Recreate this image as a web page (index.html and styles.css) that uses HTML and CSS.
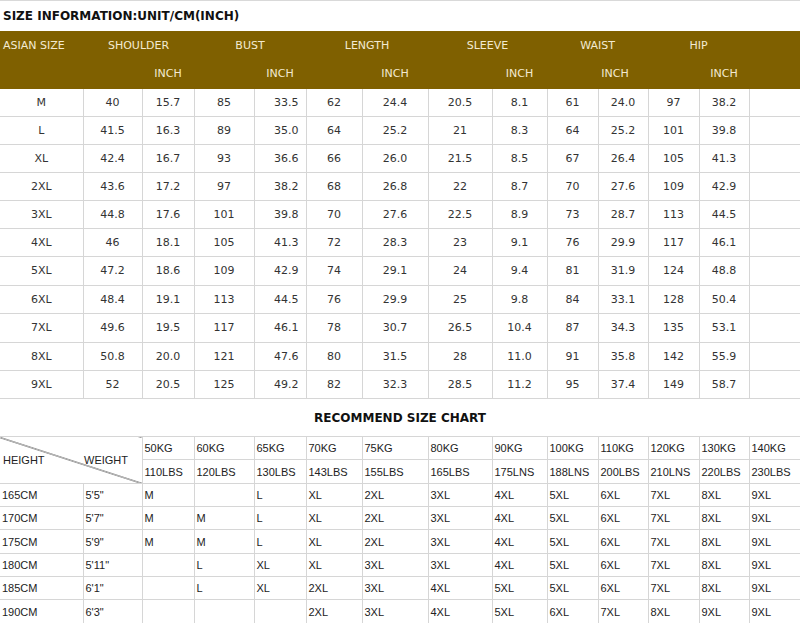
FILE: index.html
```html
<!DOCTYPE html>
<html>
<head>
<meta charset="utf-8">
<link rel="stylesheet" href="styles.css">
</head>
<body>
<table class="size-table">
  <colgroup>
    <col class="c1"><col class="c2"><col class="c3"><col class="c4"><col class="c5"><col class="c6"><col class="c7">
    <col class="c8"><col class="c9"><col class="c10"><col class="c11"><col class="c12"><col class="c13"><col class="c14">
  </colgroup>
  <tbody>
    <tr class="r-title"><td colspan="14" class="title">SIZE INFORMATION:UNIT/CM(INCH)</td></tr>
    <tr class="r-head1 head">
      <td class="h-left">ASIAN SIZE</td>
      <td colspan="2">SHOULDER</td>
      <td colspan="2">BUST</td>
      <td colspan="2">LENGTH</td>
      <td colspan="2">SLEEVE</td>
      <td colspan="2">WAIST</td>
      <td colspan="2">HIP</td>
      <td></td>
    </tr>
    <tr class="r-head2 head">
      <td></td><td></td><td>INCH</td><td></td><td>INCH</td><td></td><td>INCH</td>
      <td></td><td>INCH</td><td></td><td class="h-waist">INCH</td><td></td><td>INCH</td><td></td>
    </tr>
    <tr class="r28 data"><td>M</td><td>40</td><td>15.7</td><td>85</td><td class="bi">33.5</td><td>62</td><td>24.4</td><td>20.5</td><td>8.1</td><td>61</td><td>24.0</td><td>97</td><td>38.2</td><td></td></tr>
    <tr class="r28 data"><td>L</td><td>41.5</td><td>16.3</td><td>89</td><td class="bi">35.0</td><td>64</td><td>25.2</td><td>21</td><td>8.3</td><td>64</td><td>25.2</td><td>101</td><td>39.8</td><td></td></tr>
    <tr class="r28 data"><td>XL</td><td>42.4</td><td>16.7</td><td>93</td><td class="bi">36.6</td><td>66</td><td>26.0</td><td>21.5</td><td>8.5</td><td>67</td><td>26.4</td><td>105</td><td>41.3</td><td></td></tr>
    <tr class="r28 data"><td>2XL</td><td>43.6</td><td>17.2</td><td>97</td><td class="bi">38.2</td><td>68</td><td>26.8</td><td>22</td><td>8.7</td><td>70</td><td>27.6</td><td>109</td><td>42.9</td><td></td></tr>
    <tr class="r28 data"><td>3XL</td><td>44.8</td><td>17.6</td><td>101</td><td class="bi">39.8</td><td>70</td><td>27.6</td><td>22.5</td><td>8.9</td><td>73</td><td>28.7</td><td>113</td><td>44.5</td><td></td></tr>
    <tr class="r28 data"><td>4XL</td><td>46</td><td>18.1</td><td>105</td><td class="bi">41.3</td><td>72</td><td>28.3</td><td>23</td><td>9.1</td><td>76</td><td>29.9</td><td>117</td><td>46.1</td><td></td></tr>
    <tr class="r29 data"><td>5XL</td><td>47.2</td><td>18.6</td><td>109</td><td class="bi">42.9</td><td>74</td><td>29.1</td><td>24</td><td>9.4</td><td>81</td><td>31.9</td><td>124</td><td>48.8</td><td></td></tr>
    <tr class="r28 data"><td>6XL</td><td>48.4</td><td>19.1</td><td>113</td><td class="bi">44.5</td><td>76</td><td>29.9</td><td>25</td><td>9.8</td><td>84</td><td>33.1</td><td>128</td><td>50.4</td><td></td></tr>
    <tr class="r29 data"><td>7XL</td><td>49.6</td><td>19.5</td><td>117</td><td class="bi">46.1</td><td>78</td><td>30.7</td><td>26.5</td><td>10.4</td><td>87</td><td>34.3</td><td>135</td><td>53.1</td><td></td></tr>
    <tr class="r28 data"><td>8XL</td><td>50.8</td><td>20.0</td><td>121</td><td class="bi">47.6</td><td>80</td><td>31.5</td><td>28</td><td>11.0</td><td>91</td><td>35.8</td><td>142</td><td>55.9</td><td></td></tr>
    <tr class="r28 data"><td>9XL</td><td>52</td><td>20.5</td><td>125</td><td class="bi">49.2</td><td>82</td><td>32.3</td><td>28.5</td><td>11.2</td><td>95</td><td>37.4</td><td>149</td><td>58.7</td><td></td></tr>
    <tr class="r-rec"><td colspan="14" class="rec-title">RECOMMEND SIZE CHART</td></tr>
    <tr class="r23 chart">
      <td colspan="2" rowspan="2" class="diag"><div class="diag-labels"><span class="lbl-h">HEIGHT</span><span class="lbl-w">WEIGHT</span></div></td>
      <td>50KG</td><td>60KG</td><td>65KG</td><td>70KG</td><td>75KG</td><td>80KG</td><td>90KG</td><td>100KG</td><td>110KG</td><td>120KG</td><td>130KG</td><td>140KG</td>
    </tr>
    <tr class="r24 chart">
      <td>110LBS</td><td>120LBS</td><td>130LBS</td><td>143LBS</td><td>155LBS</td><td>165LBS</td><td>175LNS</td><td>188LNS</td><td>200LBS</td><td>210LNS</td><td>220LBS</td><td>230LBS</td>
    </tr>
    <tr class="r23 chart"><td>165CM</td><td>5'5&quot;</td><td>M</td><td></td><td>L</td><td>XL</td><td>2XL</td><td>3XL</td><td>4XL</td><td>5XL</td><td>6XL</td><td>7XL</td><td>8XL</td><td>9XL</td></tr>
    <tr class="r23 chart"><td>170CM</td><td>5'7&quot;</td><td>M</td><td>M</td><td>L</td><td>XL</td><td>2XL</td><td>3XL</td><td>4XL</td><td>5XL</td><td>6XL</td><td>7XL</td><td>8XL</td><td>9XL</td></tr>
    <tr class="r24 chart"><td>175CM</td><td>5'9&quot;</td><td>M</td><td>M</td><td>L</td><td>XL</td><td>2XL</td><td>3XL</td><td>4XL</td><td>5XL</td><td>6XL</td><td>7XL</td><td>8XL</td><td>9XL</td></tr>
    <tr class="r23 chart"><td>180CM</td><td>5'11&quot;</td><td></td><td>L</td><td>XL</td><td>XL</td><td>3XL</td><td>3XL</td><td>4XL</td><td>5XL</td><td>6XL</td><td>7XL</td><td>8XL</td><td>9XL</td></tr>
    <tr class="r23 chart"><td>185CM</td><td>6'1&quot;</td><td></td><td>L</td><td>XL</td><td>2XL</td><td>3XL</td><td>4XL</td><td>5XL</td><td>5XL</td><td>6XL</td><td>7XL</td><td>8XL</td><td>9XL</td></tr>
    <tr class="r24 chart"><td>190CM</td><td>6'3&quot;</td><td></td><td></td><td></td><td>2XL</td><td>3XL</td><td>4XL</td><td>5XL</td><td>6XL</td><td>7XL</td><td>8XL</td><td>9XL</td><td>9XL</td></tr>
  </tbody>
</table>
</body>
</html>
```

FILE: styles.css
```css
html, body {
  margin: 0;
  padding: 0;
  background: #ffffff;
}

.size-table {
  width: 800px;
  table-layout: fixed;
  border-collapse: collapse;
  font-family: "DejaVu Sans", Verdana, sans-serif;
  font-size: 11px;
  color: #333333;
}

.c1 { width: 83px; }
.c2 { width: 59px; }
.c3 { width: 52px; }
.c4 { width: 60px; }
.c5 { width: 52px; }
.c6 { width: 56px; }
.c7 { width: 66px; }
.c8 { width: 64px; }
.c9 { width: 55px; }
.c10 { width: 51px; }
.c11 { width: 50px; }
.c12 { width: 51px; }
.c13 { width: 50px; }
.c14 { width: 51px; }

.size-table td {
  padding: 0;
  border: 1px solid #d6d6d6;
  text-align: center;
  white-space: nowrap;
  overflow: hidden;
  line-height: 14px;
}

.size-table tr > td:first-child {
  border-left: none;
}

.r-title { height: 31px; }
.title {
  text-align: left !important;
  padding-left: 3px !important;
  font-weight: bold;
  font-size: 12px;
  color: #111111;
  border-left: none !important;
  border-right: none !important;
  border-bottom: none !important;
  border-top: 1px solid #d9d9d9 !important;
}

.r-head1 { height: 28px; }
.r-head2 { height: 29px; }

.head td {
  background: #7f6000;
  color: #f3ead2;
  border: 1px solid #7f6000;
}

.head td.h-left {
  text-align: left;
  padding-left: 3px;
}

.head td.h-waist {
  padding-right: 16px;
}

.r28 { height: 28px; }
.r29 { height: 29px; }

.data td.bi {
  text-align: right;
  padding-right: 7px;
}

.r-rec { height: 38px; }
.rec-title {
  font-weight: bold;
  font-size: 12px;
  color: #111111;
  border-left: none !important;
  border-right: none !important;
}

.r23 { height: 23px; }
.r24 { height: 24px; }

.chart td {
  font-family: "Liberation Sans", Arial, sans-serif;
  font-size: 11px;
  color: #222222;
  text-align: left;
  padding-left: 2px;
}

.chart td.diag {
  padding: 0;
  background: linear-gradient(to top right, transparent calc(50% - 0.8px), #444444 50%, transparent calc(50% + 0.8px));
}

.diag-labels {
  display: flex;
  align-items: center;
}

.lbl-h {
  width: 82px;
  padding-left: 3px;
  box-sizing: border-box;
}

.lbl-w {
  padding-left: 2px;
}
```
